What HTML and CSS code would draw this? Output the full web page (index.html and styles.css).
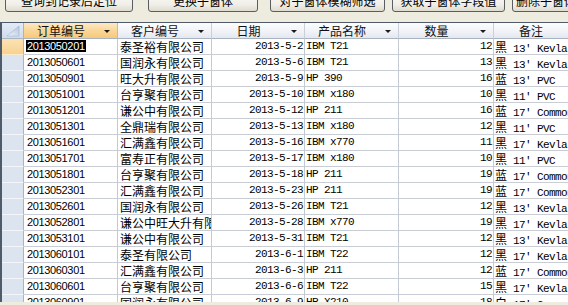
FILE: index.html
```html
<!DOCTYPE html>
<html>
<head>
<meta charset="utf-8">
<link rel="stylesheet" href="styles.css">
</head>
<body>
<div class="toolbar">
  <div class="btn b1">查询到记录后定位</div>
  <div class="btn b2">更换子窗体</div>
  <div class="btn b3">对子窗体模糊筛选</div>
  <div class="btn b4">获取子窗体字段值</div>
  <div class="btn b5">删除子窗体当前记录</div>
</div>
<div class="sheet">
  <div class="row head">
    <div class="sel-all"><svg width="21" height="15" viewBox="0 0 21 15"><defs><linearGradient id="tg" x1="0" y1="1" x2="1" y2="0"><stop offset="0" stop-color="#eef3fa"/><stop offset="1" stop-color="#b4c6de"/></linearGradient></defs><polygon points="5,13 17,3 17,13" fill="url(#tg)" stroke="#9fb2cc" stroke-width="0.6"/></svg></div>
    <div class="hc active"><span class="lbl">订单编号</span><span class="dd"></span></div>
    <div class="hc"><span class="lbl">客户编号</span><span class="dd"></span></div>
    <div class="hc"><span class="lbl">日期</span><span class="dd"></span></div>
    <div class="hc"><span class="lbl">产品名称</span><span class="dd"></span></div>
    <div class="hc"><span class="lbl">数量</span><span class="dd"></span></div>
    <div class="hc"><span class="lbl">备注</span><span class="dd"></span></div>
  </div>
  <div class="row cur"><div class="rs"></div><div class="id"><span class="hl">2013050201</span></div><div class="cu">泰圣裕有限公司</div><div class="dt">2013-5-2</div><div class="pr">IBM T21</div><div class="qt">12</div><div class="rm"><span class="zh">黑</span> 13′ Kevlar</div></div>
  <div class="row"><div class="rs"></div><div class="id">2013050601</div><div class="cu">国润永有限公司</div><div class="dt">2013-5-6</div><div class="pr">IBM T21</div><div class="qt">13</div><div class="rm"><span class="zh">黑</span> 13′ Kevlar</div></div>
  <div class="row"><div class="rs"></div><div class="id">2013050901</div><div class="cu">旺大升有限公司</div><div class="dt">2013-5-9</div><div class="pr">HP 390</div><div class="qt">16</div><div class="rm"><span class="zh">蓝</span> 13′ PVC</div></div>
  <div class="row"><div class="rs"></div><div class="id">2013051001</div><div class="cu">台亨聚有限公司</div><div class="dt">2013-5-10</div><div class="pr">IBM x180</div><div class="qt">10</div><div class="rm"><span class="zh">黑</span> 11′ PVC</div></div>
  <div class="row"><div class="rs"></div><div class="id">2013051201</div><div class="cu">谦公中有限公司</div><div class="dt">2013-5-12</div><div class="pr">HP 211</div><div class="qt">16</div><div class="rm"><span class="zh">蓝</span> 17′ Common</div></div>
  <div class="row"><div class="rs"></div><div class="id">2013051301</div><div class="cu">全鼎瑞有限公司</div><div class="dt">2013-5-13</div><div class="pr">IBM x180</div><div class="qt">12</div><div class="rm"><span class="zh">黑</span> 11′ PVC</div></div>
  <div class="row"><div class="rs"></div><div class="id">2013051601</div><div class="cu">汇满鑫有限公司</div><div class="dt">2013-5-16</div><div class="pr">IBM x770</div><div class="qt">11</div><div class="rm"><span class="zh">黑</span> 17′ Kevlar</div></div>
  <div class="row"><div class="rs"></div><div class="id">2013051701</div><div class="cu">富寿正有限公司</div><div class="dt">2013-5-17</div><div class="pr">IBM x180</div><div class="qt">10</div><div class="rm"><span class="zh">黑</span> 11′ PVC</div></div>
  <div class="row"><div class="rs"></div><div class="id">2013051801</div><div class="cu">台亨聚有限公司</div><div class="dt">2013-5-18</div><div class="pr">HP 211</div><div class="qt">19</div><div class="rm"><span class="zh">蓝</span> 17′ Common</div></div>
  <div class="row"><div class="rs"></div><div class="id">2013052301</div><div class="cu">汇满鑫有限公司</div><div class="dt">2013-5-23</div><div class="pr">HP 211</div><div class="qt">19</div><div class="rm"><span class="zh">蓝</span> 17′ Common</div></div>
  <div class="row"><div class="rs"></div><div class="id">2013052601</div><div class="cu">国润永有限公司</div><div class="dt">2013-5-26</div><div class="pr">IBM T21</div><div class="qt">12</div><div class="rm"><span class="zh">黑</span> 13′ Kevlar</div></div>
  <div class="row"><div class="rs"></div><div class="id">2013052801</div><div class="cu">谦公中旺大升有限公司</div><div class="dt">2013-5-28</div><div class="pr">IBM x770</div><div class="qt">19</div><div class="rm"><span class="zh">黑</span> 17′ Kevlar</div></div>
  <div class="row"><div class="rs"></div><div class="id">2013053101</div><div class="cu">谦公中有限公司</div><div class="dt">2013-5-31</div><div class="pr">IBM T21</div><div class="qt">12</div><div class="rm"><span class="zh">黑</span> 13′ Kevlar</div></div>
  <div class="row"><div class="rs"></div><div class="id">2013060101</div><div class="cu">泰圣有限公司</div><div class="dt">2013-6-1</div><div class="pr">IBM T22</div><div class="qt">12</div><div class="rm"><span class="zh">黑</span> 17′ Kevlar</div></div>
  <div class="row"><div class="rs"></div><div class="id">2013060301</div><div class="cu">汇满鑫有限公司</div><div class="dt">2013-6-3</div><div class="pr">HP 211</div><div class="qt">12</div><div class="rm"><span class="zh">蓝</span> 17′ Common</div></div>
  <div class="row"><div class="rs"></div><div class="id">2013060601</div><div class="cu">台亨聚有限公司</div><div class="dt">2013-6-6</div><div class="pr">IBM T22</div><div class="qt">15</div><div class="rm"><span class="zh">黑</span> 17′ Kevlar</div></div>
  <div class="row"><div class="rs"></div><div class="id">2013060901</div><div class="cu">国润永有限公司</div><div class="dt">2013-6-9</div><div class="pr">HP X210</div><div class="qt">18</div><div class="rm"><span class="zh">白</span> 17′ Carry</div></div>
</div>
</body>
</html>
```
FILE: styles.css
```css
* { box-sizing: border-box; }
html, body { margin: 0; padding: 0; }
body {
  width: 568px;
  height: 305px;
  overflow: hidden;
  background: #eeecdf;
  font-family: "Noto Sans CJK SC", sans-serif;
  color: #000;
}
.toolbar {
  display: flex;
  height: 24px;
  margin-top: -12px;
  padding-left: 5px;
}
.btn {
  flex: none;
  height: 24px;
  border: 1px solid #5a5d62;
  border-radius: 3px;
  background: linear-gradient(#fdfdfb, #f1efe8 70%, #dedbcf);
  font-size: 12px;
  line-height: 20px;
  padding-top: 2px;
  text-align: center;
  white-space: nowrap;
  overflow: hidden;
}
.b1 { width: 128px; }
.b2 { width: 110px; margin-left: 15px; }
.b3 { width: 115px; margin-left: 12px; }
.b4 { width: 113px; margin-left: 7px; }
.b5 { width: 118px; margin-left: 7px; text-align: left; padding-left: 3px; }

.sheet {
  margin-top: 10px;
  height: 280px;
  overflow: hidden;
  border-top: 1px solid #4f5a6a;
  border-left: 2px solid #4f5a6a;
  background: #fff;
}
.row {
  display: grid;
  grid-template-columns: 22px 94px 94px 93px 94px 95px 94px;
  height: 16px;
}
.row > div {
  border-right: 1px solid #c4cad3;
  border-bottom: 1px solid #c9ced6;
  overflow: hidden;
  white-space: nowrap;
  line-height: 15px;
  height: 16px;
}
.head > div {
  background: linear-gradient(#fcfdfe, #f2f4f8 50%, #e4e8ef);
  border-right-color: #c9d0da;
  border-bottom-color: #a9b3c1;
  display: flex;
  align-items: center;
}
.head > .sel-all {
  background: linear-gradient(#e3ebf6, #cfdcec);
  border-right-color: #a8b5c6;
}
.sel-all svg { display: block; }
.head > .active {
  background: linear-gradient(#fde9c6, #f9d594 55%, #f6c977);
  border-right-color: #d9b87a;
}
.lbl {
  flex: 1;
  text-align: center;
  font-size: 12px;
  color: #111;
}
.dd {
  flex: none;
  width: 0;
  height: 0;
  margin: 2px 7px 0 6px;
  border-left: 3px solid transparent;
  border-right: 3px solid transparent;
  border-top: 3px solid #1a1a1a;
}
.row > .rs {
  background: #dce4f0;
  border-bottom-color: #f2f5fa;
  border-right-color: #a8b5c6;
}
.cur > .rs {
  background: linear-gradient(#fbe2b3, #f8d291);
  border-bottom-color: #fbe9c8;
}
.id {
  font-family: "Liberation Sans", Arial, sans-serif;
  font-size: 11px;
  letter-spacing: -0.35px;
  padding-left: 3px;
}
.hl {
  background: #000;
  color: #fff;
  margin-left: -1px;
  padding: 0 1px;
}
.cu {
  font-size: 12px;
  padding-left: 2px;
}
.dt, .pr, .qt, .rm {
  font-family: "Liberation Mono", "DejaVu Sans Mono", monospace;
  font-size: 11px;
  letter-spacing: -0.6px;
}
.dt { text-align: right; padding-right: 1px; }
.pr { padding-left: 1px; }
.qt { text-align: right; padding-right: 1px; }
.rm { padding-left: 1px; }
.zh {
  font-family: "Noto Sans CJK SC", sans-serif;
  font-size: 12px;
  letter-spacing: 0;
}
```
